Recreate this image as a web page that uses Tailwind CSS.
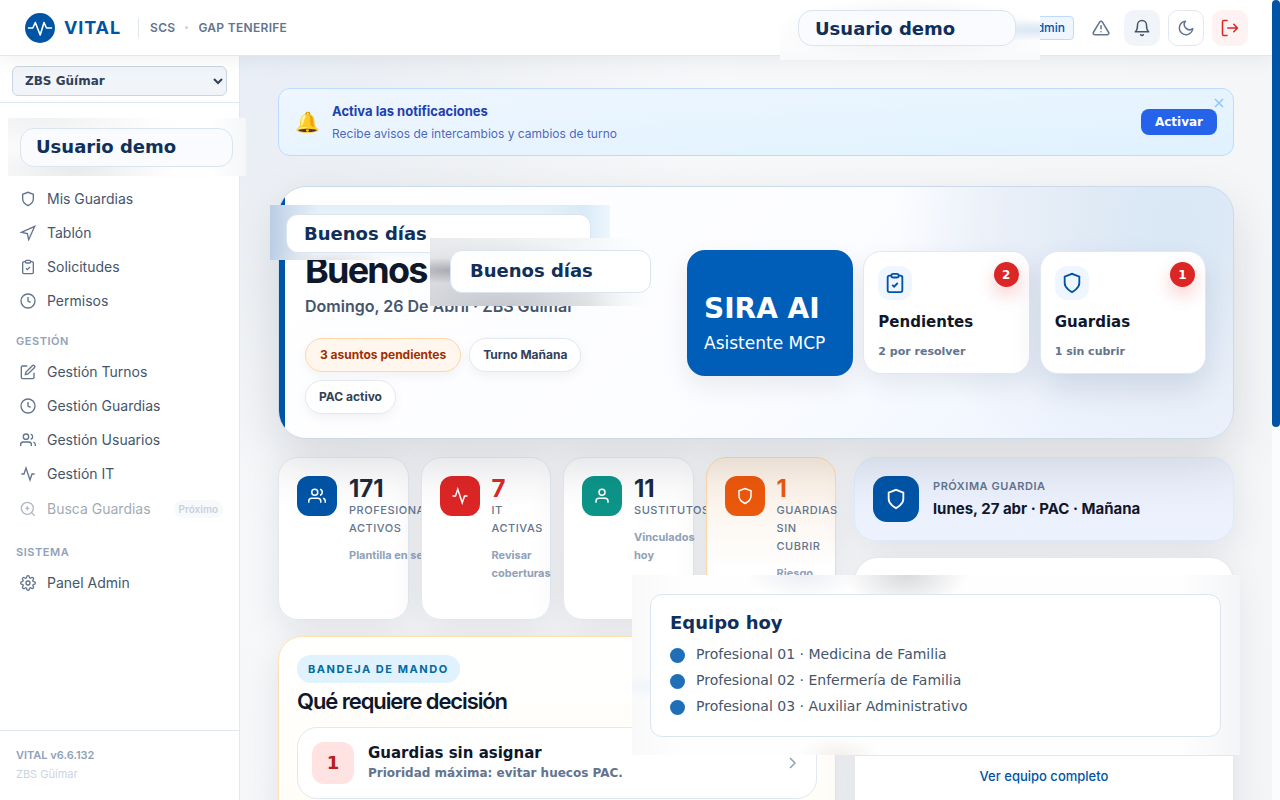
<!DOCTYPE html>
<html lang="es">
<head>
<meta charset="utf-8">
<meta name="viewport" content="width=device-width, initial-scale=1">
<title>VITAL</title>
<script src="https://cdn.jsdelivr.net/npm/@tailwindcss/browser@4"></script>
</head>
<body class="relative flex h-screen flex-col overflow-hidden bg-[#f6f7f9] font-['Inter',sans-serif] text-slate-900">
<svg class="hidden" aria-hidden="true">
  <defs>
    <symbol id="shield" viewBox="0 0 24 24"><path d="M12 22s8-4 8-10V5l-8-3-8 3v7c0 6 8 10 8 10z"/></symbol>
    <symbol id="nav" viewBox="0 0 24 24"><path d="M2 11l20-9-9 20-2-9-9-2z"/></symbol>
    <symbol id="clip" viewBox="0 0 24 24"><path d="M16 4h2a2 2 0 0 1 2 2v14a2 2 0 0 1-2 2H6a2 2 0 0 1-2-2V6a2 2 0 0 1 2-2h2"/><rect x="8" y="2" width="8" height="4" rx="2"/><path d="M9 14l2 2 4-4"/></symbol>
    <symbol id="clock" viewBox="0 0 24 24"><circle cx="12" cy="12" r="10.5"/><path d="M12 6v6l4 2"/></symbol>
    <symbol id="edit" viewBox="0 0 24 24"><path d="M11 3H4a2 2 0 0 0-2 2v15a2 2 0 0 0 2 2h15a2 2 0 0 0 2-2v-7"/><path d="M18.500 2.500a2.120 2.120 0 0 1 3 3L12 15l-4 1 1-4z"/></symbol>
    <symbol id="users" viewBox="0 0 24 24"><path d="M17 21v-2a4 4 0 0 0-4-4H5a4 4 0 0 0-4 4v2"/><circle cx="9" cy="7" r="4"/><path d="M23 21v-2a4 4 0 0 0-3-3.870"/><path d="M16 3.130a4 4 0 0 1 0 7.750"/></symbol>
    <symbol id="pulse" viewBox="0 0 24 24"><path d="M22 12h-4l-3 9L9 3l-3 9H2"/></symbol>
    <symbol id="zoom" viewBox="0 0 24 24"><circle cx="11" cy="11" r="9"/><path d="M22 22l-4.600-4.600M11 8v6M8 11h6"/></symbol>
    <symbol id="user" viewBox="0 0 24 24"><path d="M20 21v-2a4 4 0 0 0-4-4H8a4 4 0 0 0-4 4v2"/><circle cx="12" cy="7" r="4"/></symbol>
    <symbol id="gear" viewBox="0 0 24 24"><circle cx="12" cy="12" r="3"/><path d="M19.400 15a1.650 1.650 0 0 0 .33 1.820l.06.06a2 2 0 1 1-2.830 2.830l-.06-.06a1.650 1.650 0 0 0-2.800 1.180V21a2 2 0 0 1-4 0v-.09A1.650 1.650 0 0 0 9 19.400a1.650 1.650 0 0 0-1.820.33l-.06.06a2 2 0 1 1-2.830-2.830l.06-.06A1.650 1.650 0 0 0 3.170 14H3a2 2 0 0 1 0-4h.09A1.650 1.650 0 0 0 4.600 9a1.650 1.650 0 0 0-.33-1.820l-.06-.06a2 2 0 1 1 2.830-2.830l.06.06A1.650 1.650 0 0 0 10 3.090V3a2 2 0 0 1 4 0v.09a1.650 1.650 0 0 0 2.800 1.180l.06-.06a2 2 0 1 1 2.830 2.830l-.06.06A1.650 1.650 0 0 0 20.910 10H21a2 2 0 0 1 0 4h-.09a1.650 1.650 0 0 0-1.510 1z"/></symbol>
  </defs>
</svg>

<header class="relative z-10 mr-2 flex h-14 shrink-0 items-center border-b border-slate-200 bg-white pr-6 pl-[25px] shadow-[0_4px_20px_rgba(15,23,42,0.06)]">
  <svg class="size-[30px]" viewBox="0 0 30 30" aria-hidden="true"><circle cx="15" cy="15" r="15" fill="#0054a6"/><path d="M3.500 15h4.300l2.500-5.500 4.900 12.500 3.800-12.500 2.500 5.500h5" fill="none" stroke="#fff" stroke-width="1.600" stroke-linejoin="round" stroke-linecap="round"/></svg>
  <span class="ml-[9px] text-lg font-bold tracking-wider text-[#0054a6]">VITAL</span>
  <span class="mr-[11px] ml-[17px] h-5 w-px bg-slate-200"></span>
  <div class="flex items-center gap-[10px] text-xs font-semibold tracking-wide text-slate-500">
    <span>SCS</span><span class="size-[3px] rounded-full bg-slate-300"></span><span>GAP TENERIFE</span>
  </div>
  <div class="ml-auto flex items-center gap-2">
    <span class="mr-1 rounded border border-blue-200 bg-blue-50 px-2 py-[3px] text-xs leading-4 font-medium text-[#0054a6]">Admin</span>
    <button class="grid h-9 w-[30px] place-items-center text-slate-500" aria-label="Avisos"><svg class="size-[18px]" viewBox="0 0 24 24" fill="none" stroke="currentColor" stroke-width="2" stroke-linecap="round" stroke-linejoin="round"><path d="M10.300 3.900L1.800 18a2 2 0 0 0 1.700 3h17a2 2 0 0 0 1.700-3L13.700 3.900a2 2 0 0 0-3.400 0zM12 9v4M12 17h.01"/></svg></button>
    <button class="grid size-9 place-items-center rounded-[10px] bg-slate-100 text-slate-600" aria-label="Notificaciones"><svg class="size-[18px]" viewBox="0 0 24 24" fill="none" stroke="currentColor" stroke-width="2" stroke-linecap="round" stroke-linejoin="round"><path d="M18 8A6 6 0 0 0 6 8c0 7-3 9-3 9h18s-3-2-3-9M13.700 21a2 2 0 0 1-3.400 0"/></svg></button>
    <button class="grid size-9 place-items-center rounded-[10px] border border-slate-200 bg-white text-slate-500" aria-label="Modo oscuro"><svg class="size-[18px]" viewBox="0 0 24 24" fill="none" stroke="currentColor" stroke-width="2" stroke-linecap="round" stroke-linejoin="round"><path d="M21 12.800A9 9 0 1 1 11.200 3 7 7 0 0 0 21 12.800z"/></svg></button>
    <button class="grid size-9 place-items-center rounded-[10px] bg-red-50 text-[#dc2626]" aria-label="Salir"><svg class="size-[18px]" viewBox="0 0 24 24" fill="none" stroke="currentColor" stroke-width="2" stroke-linecap="round" stroke-linejoin="round"><path d="M8 22H4a2 2 0 0 1-2-2V4a2 2 0 0 1 2-2h4M17 17l5-5-5-5M22 12H9"/></svg></button>
  </div>
</header>

<div class="flex min-h-0 flex-1">
  <aside class="flex w-60 shrink-0 flex-col border-r border-slate-200 bg-white">
    <div class="border-b border-slate-200 px-3 pt-[10px] pb-[6px]">
      <select aria-label="Zona básica de salud" class="h-[30px] w-[215px] max-w-full rounded-md border border-slate-300 bg-slate-100 px-2 font-['DejaVu_Sans',sans-serif] text-xs font-bold text-slate-700"><option>ZBS Güímar</option></select>
    </div>
    <nav class="flex flex-col px-2 pt-[79px] text-sm text-slate-600">
      <a href="#" class="flex h-[34px] items-center gap-[11px] px-3"><svg class="size-4 fill-none stroke-slate-500 stroke-2"><use href="#shield"/></svg>Mis Guardias</a>
      <a href="#" class="flex h-[34px] items-center gap-[11px] px-3"><svg class="size-4 fill-none stroke-slate-500 stroke-2"><use href="#nav"/></svg>Tablón</a>
      <a href="#" class="flex h-[34px] items-center gap-[11px] px-3"><svg class="size-4 fill-none stroke-slate-500 stroke-2"><use href="#clip"/></svg>Solicitudes</a>
      <a href="#" class="flex h-[34px] items-center gap-[11px] px-3"><svg class="size-4 fill-none stroke-slate-500 stroke-2"><use href="#clock"/></svg>Permisos</a>
      <h2 class="mt-[15px] mb-[6px] px-2 text-[11px] leading-4 font-semibold tracking-wider text-slate-400">GESTIÓN</h2>
      <a href="#" class="flex h-[34px] items-center gap-[11px] px-3"><svg class="size-4 fill-none stroke-slate-500 stroke-2"><use href="#edit"/></svg>Gestión Turnos</a>
      <a href="#" class="flex h-[34px] items-center gap-[11px] px-3"><svg class="size-4 fill-none stroke-slate-500 stroke-2"><use href="#clock"/></svg>Gestión Guardias</a>
      <a href="#" class="flex h-[34px] items-center gap-[11px] px-3"><svg class="size-4 fill-none stroke-slate-500 stroke-2"><use href="#users"/></svg>Gestión Usuarios</a>
      <a href="#" class="flex h-[34px] items-center gap-[11px] px-3"><svg class="size-4 fill-none stroke-slate-500 stroke-2"><use href="#pulse"/></svg>Gestión IT</a>
      <a href="#" class="flex h-9 items-center gap-[11px] pr-2 pl-3 opacity-50"><svg class="size-4 fill-none stroke-slate-500 stroke-2"><use href="#zoom"/></svg>Busca Guardias<span class="ml-auto rounded-full bg-slate-100 px-[5px] py-[3px] text-[10px] leading-3 font-semibold text-slate-400">Próximo</span></a>
      <h2 class="mt-[17px] mb-[6px] px-2 text-[11px] leading-4 font-semibold tracking-wider text-slate-400">SISTEMA</h2>
      <a href="#" class="flex h-[34px] items-center gap-[11px] px-3"><svg class="size-4 fill-none stroke-slate-500 stroke-2"><use href="#gear"/></svg>Panel Admin</a>
    </nav>
    <div class="mt-auto border-t border-slate-200 px-4 pt-[15px] pb-[16px] text-[11px] leading-[19px]">
      <p class="font-semibold text-slate-400">VITAL v6.6.132</p>
      <p class="text-slate-300">ZBS Güímar</p>
    </div>
  </aside>

  <main class="mr-2 min-w-0 flex-1 overflow-hidden bg-[radial-gradient(circle_at_0_0,#e8eef7_0,#edf0f4_180px,#f7f8fa_480px,#f4f5f7_100%)] px-[38px] pt-8">
    <section class="relative flex h-[68px] items-center rounded-xl border border-blue-200 bg-linear-to-br from-blue-50 to-sky-100 px-4">
      <span class="w-[37px] font-['Noto_Color_Emoji',sans-serif] text-xl">🔔</span>
      <div>
        <p class="text-[13px] leading-[22px] font-bold text-[#1e40af]">Activa las notificaciones</p>
        <p class="text-xs leading-[23px] text-[#1e40af]/80">Recibe avisos de intercambios y cambios de turno</p>
      </div>
      <button class="ml-auto h-[26px] rounded-lg bg-[#2563eb] px-[14px] font-['DejaVu_Sans',sans-serif] text-xs font-bold text-white">Activar</button>
      <button class="absolute top-[9px] right-[9px] size-[10px] text-blue-300" aria-label="Cerrar"><svg viewBox="0 0 10 10" stroke="currentColor" stroke-width="1.500"><path d="M1 1l8 8M9 1L1 9"/></svg></button>
    </section>

    <section class="relative z-[1] mt-[30px] grid min-h-[253px] grid-cols-[minmax(0,1fr)_519px] items-center gap-[18px] overflow-hidden rounded-[28px] border border-[#cbd9e8] bg-[radial-gradient(circle_at_94%_15%,#d9e7f5_0,#dde9f5_60px,#e9eff8_170px,transparent_280px),linear-gradient(135deg,#fff_0%,#fbfcff_55%,#eaf3ff_100%)] py-6 pr-[27px] pl-[26px] shadow-[0_20px_50px_rgba(15,23,42,0.13)]">
      <span class="absolute inset-y-0 left-0 w-[6px] bg-[#0054a6]"></span>
      <div class="self-end">
        <h1 class="text-4xl leading-10 font-bold tracking-tighter">Buenos</h1>
        <p class="mt-1 text-base font-semibold text-slate-600">Domingo, 26 De Abril · ZBS Güímar</p>
        <div class="mt-5 flex max-w-[330px] flex-wrap gap-2 text-xs leading-4 font-bold text-slate-700">
          <span class="rounded-full border border-orange-200 bg-orange-50 px-[14px] py-2 text-orange-800 shadow-[0_4px_12px_rgba(15,23,42,0.05)]">3 asuntos pendientes</span>
          <span class="rounded-full border border-slate-200 bg-white px-[13px] py-2 shadow-[0_4px_12px_rgba(15,23,42,0.05)]">Turno Mañana</span>
          <span class="rounded-full border border-slate-200 bg-white px-[13px] py-2 shadow-[0_4px_12px_rgba(15,23,42,0.05)]">PAC activo</span>
        </div>
      </div>
      <div class="grid grid-cols-3 items-center gap-[10px] font-['DejaVu_Sans',sans-serif]">
        <button class="h-[126px] rounded-[18px] bg-[#005eb8] px-[17px] pt-6 text-left text-white shadow-[0_10px_26px_rgba(15,23,42,0.08)]"><span class="block text-[28px] leading-9 font-bold">SIRA AI</span><span class="block text-[17px] leading-8 whitespace-nowrap">Asistente MCP</span></button>
        <button class="relative h-[123px] rounded-[18px] border border-slate-200 bg-white p-[14px] text-left shadow-[0_10px_26px_rgba(15,23,42,0.08)]">
          <span class="grid size-[34px] place-items-center rounded-xl bg-blue-50"><svg class="size-[22px] fill-none stroke-[#0054a6] stroke-2"><use href="#clip"/></svg></span>
          <span class="absolute top-[10px] right-[10px] grid size-[25px] place-items-center rounded-full bg-[#dc2626] text-xs font-bold text-white shadow-[0_8px_18px_rgba(220,38,38,0.24)]">2</span>
          <span class="mt-3 block text-[15px] leading-5 font-black">Pendientes</span><span class="mt-[10px] block text-[11px] leading-5 font-bold text-slate-500">2 por resolver</span>
        </button>
        <button class="relative h-[123px] rounded-[18px] border border-slate-200 bg-white p-[14px] text-left shadow-[0_14px_30px_rgba(0,50,110,0.12)]">
          <span class="grid size-[34px] place-items-center rounded-xl bg-blue-50"><svg class="size-[22px] fill-none stroke-[#0054a6] stroke-2"><use href="#shield"/></svg></span>
          <span class="absolute top-[10px] right-[10px] grid size-[25px] place-items-center rounded-full bg-[#dc2626] text-xs font-bold text-white shadow-[0_8px_18px_rgba(220,38,38,0.24)]">1</span>
          <span class="mt-3 block text-[15px] leading-5 font-black">Guardias</span><span class="mt-[10px] block text-[11px] leading-5 font-bold text-slate-500">1 sin cubrir</span>
        </button>
      </div>
    </section>

    <div class="mt-[18px] grid grid-cols-[minmax(0,1fr)_380px] gap-[18px]">
      <div class="min-w-0">
        <div class="grid grid-cols-4 gap-3">
          <article class="relative flex h-[163px] gap-3 rounded-[20px] border border-slate-200 bg-linear-to-b from-[#f9f9fa] to-white to-35% p-[18px] shadow-[0_12px_36px_rgba(15,23,42,0.09)]">
            <span class="grid size-10 shrink-0 place-items-center rounded-xl bg-[#0054a6]"><svg class="size-[18px] fill-none stroke-white stroke-2"><use href="#users"/></svg></span>
            <div class="min-w-0 text-[11px] leading-[18px]"><p class="text-2xl leading-[25px] font-bold text-slate-800">171</p><p class="font-medium tracking-wider text-slate-500">PROFESIONALES ACTIVOS</p><p class="mt-[9px] font-bold whitespace-nowrap text-slate-400">Plantilla en servicio</p></div>
          </article>
          <article class="relative flex h-[163px] gap-3 rounded-[20px] border border-slate-200 bg-linear-to-b from-[#f9f9fa] to-white to-35% p-[18px] shadow-[0_12px_36px_rgba(15,23,42,0.09)]">
            <span class="grid size-10 shrink-0 place-items-center rounded-xl bg-[#dc2626]"><svg class="size-[18px] fill-none stroke-white stroke-2"><use href="#pulse"/></svg></span>
            <div class="min-w-0 text-[11px] leading-[18px]"><p class="text-2xl leading-[25px] font-bold text-[#dc2626]">7</p><p class="font-medium tracking-wider text-slate-500">IT<br>ACTIVAS</p><p class="mt-[9px] font-bold text-slate-400">Revisar coberturas</p></div>
          </article>
          <article class="relative flex h-[163px] gap-3 rounded-[20px] border border-slate-200 bg-linear-to-b from-[#f9f9fa] to-white to-35% p-[18px] shadow-[0_12px_36px_rgba(15,23,42,0.09)]">
            <span class="grid size-10 shrink-0 place-items-center rounded-xl bg-[#0d9488]"><svg class="size-[18px] fill-none stroke-white stroke-2"><use href="#user"/></svg></span>
            <div class="min-w-0 text-[11px] leading-[18px]"><p class="text-2xl leading-[25px] font-bold text-slate-800">11</p><p class="font-medium tracking-wider text-slate-500">SUSTITUTOS</p><p class="mt-[9px] font-bold text-slate-400">Vinculados hoy</p></div>
          </article>
          <article class="relative flex h-[163px] gap-3 rounded-[20px] border border-orange-200 bg-linear-to-b from-[#f9ede1] to-white to-70% p-[18px] shadow-[0_12px_36px_rgba(15,23,42,0.09)]">
            <span class="grid size-10 shrink-0 place-items-center rounded-xl bg-[#ea580c]"><svg class="size-[18px] fill-none stroke-white stroke-2"><use href="#shield"/></svg></span>
            <div class="min-w-0 text-[11px] leading-[18px]"><p class="text-2xl leading-[25px] font-bold text-[#ea580c]">1</p><p class="font-medium tracking-wider text-slate-500">GUARDIAS SIN CUBRIR</p><p class="mt-[9px] font-bold text-slate-400">Riesgo PAC</p></div>
          </article>
        </div>

        <section class="relative mt-4 rounded-3xl border border-[#fde3ae] bg-linear-to-b from-white to-[#fffdf5] px-[18px] pt-[18px] pb-10 shadow-[0_12px_36px_rgba(15,23,42,0.09)]">
          <span class="inline-block rounded-full bg-sky-100 px-[11px] py-[6px] text-[11px] leading-4 font-bold tracking-[0.14em] text-[#0369a1]">BANDEJA DE MANDO</span>
          <h2 class="mt-[2px] text-[22px] leading-8 font-semibold tracking-tighter">Qué requiere decisión</h2>
          <a href="#" class="mt-[10px] flex h-[72px] items-center rounded-[20px] border border-slate-200 bg-white px-[14px] font-['DejaVu_Sans',sans-serif]">
            <span class="grid size-[42px] place-items-center rounded-xl bg-red-100 text-lg font-black text-[#b91c1c]">1</span>
            <span class="ml-[14px] leading-5"><b class="block text-[15px]">Guardias sin asignar</b><b class="block text-xs leading-5 text-slate-500">Prioridad máxima: evitar huecos PAC.</b></span>
            <svg class="mr-[5px] ml-auto h-3 w-2 fill-none stroke-slate-400 stroke-[1.500]" viewBox="0 0 8 12"><path d="M1 1l5 5-5 5"/></svg>
          </a>
        </section>
      </div>

      <div>
        <article class="relative flex h-[84px] items-center gap-[14px] rounded-[22px] border border-blue-100 bg-linear-to-b from-[#e7edf7] to-[#edf2ff] px-[18px] shadow-[0_12px_36px_rgba(15,23,42,0.09)]">
          <span class="grid size-[46px] place-items-center rounded-[14px] bg-[#0054a6]"><svg class="size-[22px] fill-none stroke-white stroke-2"><use href="#shield"/></svg></span>
          <div><p class="text-[11px] leading-5 font-semibold tracking-wider text-slate-500">PRÓXIMA GUARDIA</p><p class="text-[15px] leading-[26px] font-bold">lunes, 27 abr · PAC · Mañana</p></div>
        </article>
        <article class="relative mt-4 h-72 rounded-3xl border border-slate-200 bg-white pt-[197px] shadow-[0_12px_36px_rgba(15,23,42,0.09)]">
          <a href="#" class="block border-t border-slate-200 py-[10px] text-center text-[13px] leading-5 font-medium text-[#0054a6]">Ver equipo completo</a>
        </article>
      </div>
    </div>
  </main>
</div>

<!-- Floating labels over the page -->
<div class="absolute top-0 left-[780px] z-20 h-[60px] w-[260px] bg-[radial-gradient(ellipse_at_97%_50%,#dbe8f5_0,#e6eef7_10%,transparent_26%),radial-gradient(ellipse_at_50%_50%,#f1f2f3_30%,transparent_75%),linear-gradient(#fff,#fff_50%,#f8f9fb)] pt-[10px] pl-[18px] font-['DejaVu_Sans',sans-serif] text-lg font-bold text-[#10305a]">
  <div class="flex h-9 w-[218px] items-center rounded-[14px] border border-[#dae5f0] bg-[#f9fbff] px-4 pt-px">Usuario demo</div>
</div>
<div class="absolute top-[118px] left-2 z-20 h-[58px] w-[238px] bg-[radial-gradient(ellipse_at_28%_90%,#e9eaeb_0,transparent_40%),radial-gradient(ellipse_at_15%_0%,#f0f1f2_0,transparent_40%),linear-gradient(90deg,#fbfbfc,#fff_85%,#f4f6f8)] pt-[10px] pl-3 font-['DejaVu_Sans',sans-serif] text-lg font-bold text-[#10305a]">
  <div class="flex h-[39px] w-[213px] items-center rounded-[14px] border border-[#dae5f0] bg-[#f9fbff] px-[15px] pb-px">Usuario demo</div>
</div>
<div class="absolute top-[205px] left-[270px] z-20 h-[55px] w-[340px] bg-[radial-gradient(ellipse_at_17%_100%,#e1e3e6_0,transparent_15%),linear-gradient(90deg,#b9cde4_0,#cddbec_5%,transparent_14%),linear-gradient(90deg,transparent_80%,#d9ebf7_92%,#edf6fd),linear-gradient(#e2eff8,#f2f8fd_60%,#f9fcff)] pt-[9px] pl-4 font-['DejaVu_Sans',sans-serif] text-lg font-bold text-[#10305a]">
  <div class="flex h-[39px] w-[305px] items-center rounded-xl border border-[#dae5f0] bg-white px-[17px]">Buenos días</div>
</div>
<div class="absolute top-[238px] left-[430px] z-20 h-[68px] w-[228px] bg-[linear-gradient(90deg,transparent_70%,#fcfdff),radial-gradient(ellipse_at_10%_48%,#a9abb2_0,transparent_26%),radial-gradient(ellipse_at_30%_110%,#c2c5cb_0,transparent_70%),linear-gradient(90deg,#e9eaed,#f3f4f6_60%,#fcfdff)] pt-3 pl-5 font-['DejaVu_Sans',sans-serif] text-lg font-bold text-[#10305a]">
  <div class="flex h-[43px] w-[201px] items-center rounded-xl border border-[#dae5f0] bg-white px-[19px] pb-px">Buenos días</div>
</div>
<section class="absolute top-[575px] right-10 left-[632px] z-20 h-[180px] bg-[radial-gradient(ellipse_at_45%_0%,#d9dadd_0,transparent_13%),radial-gradient(ellipse_at_28%_0%,#eceef4_0,transparent_9%),radial-gradient(ellipse_at_2%_62%,#f1f6fa_0,transparent_8%),radial-gradient(ellipse_at_34%_100%,#f3f1ee_0,transparent_7%),linear-gradient(90deg,#f9f9f9_0,#fefefe_8%,#fefefe_90%,#f4f5f7)] py-[19px] pr-[19px] pl-[18px] font-['DejaVu_Sans',sans-serif]">
  <div class="h-[143px] rounded-xl border border-[#dae5f0] bg-white px-[19px] pt-[14px]">
    <h2 class="text-lg leading-7 font-bold text-[#10305a]">Equipo hoy</h2>
    <ul class="mt-1 text-sm leading-[26px] text-slate-600">
      <li class="flex items-center gap-[11px]"><span class="mt-[2px] size-[15px] rounded-full bg-[#1e6fb8]"></span>Profesional 01 · Medicina de Familia</li>
      <li class="flex items-center gap-[11px]"><span class="mt-[2px] size-[15px] rounded-full bg-[#1e6fb8]"></span>Profesional 02 · Enfermería de Familia</li>
      <li class="flex items-center gap-[11px]"><span class="mt-[2px] size-[15px] rounded-full bg-[#1e6fb8]"></span>Profesional 03 · Auxiliar Administrativo</li>
    </ul>
  </div>
</section>
<!-- Scroll track and thumb -->
<div class="absolute inset-y-0 right-0 z-30 w-2 bg-[#fbfcfd]"><div class="h-[427px] rounded bg-[#0054a6]"></div></div>
</body>
</html>
